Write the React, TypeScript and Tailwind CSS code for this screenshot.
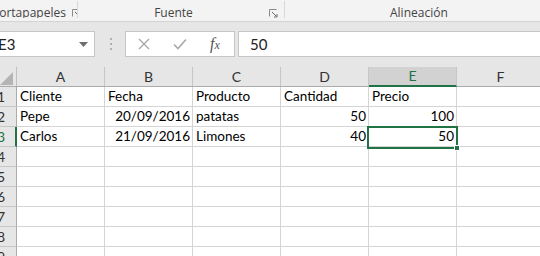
import React from "react";

const cols = ["A", "B", "C", "D", "E", "F"];

type Cell = { t: string; r?: boolean };
const data: Cell[][] = [
  [{ t: "Cliente" }, { t: "Fecha" }, { t: "Producto" }, { t: "Cantidad" }, { t: "Precio" }, { t: "" }],
  [{ t: "Pepe" }, { t: "20/09/2016", r: true }, { t: "patatas" }, { t: "50", r: true }, { t: "100", r: true }, { t: "" }],
  [{ t: "Carlos" }, { t: "21/09/2016", r: true }, { t: "Limones" }, { t: "40", r: true }, { t: "50", r: true }, { t: "" }],
];

const Launcher = () => (
  <svg width="9" height="9" viewBox="0 0 9 9" className="shrink-0">
    <path d="M0.5 0.5h7M0.5 0.5v7" stroke="#8a8a8a" strokeWidth="1" fill="none" />
    <path d="M3 3l4 4M5 8h3V5" stroke="#6a6a6a" strokeWidth="1" fill="none" />
  </svg>
);

export default function App() {
  const rows = Array.from({ length: 9 }, (_, i) => i + 1);
  return (
    <div className="w-[540px] h-[256px] overflow-hidden bg-[#e6e6e6] relative" style={{ fontFamily: "Lato, 'Liberation Sans', sans-serif" }}>
      {/* Ribbon group labels */}
      <div className="h-[22px] bg-[#f3f3f3] border-b border-[#d4d4d4] flex text-[12px] text-[#444]" style={{ fontFamily: "'Open Sans', 'Noto Sans', sans-serif" }}>
        <div className="w-[78px] flex items-center border-r border-[#d8d8d8] h-[17px] mt-[1px] overflow-hidden shrink-0">
          <span className="ml-[-8px] whitespace-nowrap leading-none pt-[7px]">Portapapeles</span>
          <span className="ml-[6px] pt-[8px]"><Launcher /></span>
        </div>
        <div className="w-[207px] flex items-center border-r border-[#d8d8d8] h-[17px] mt-[1px] shrink-0 relative">
          <span className="flex-1 text-center leading-none pt-[7px]">Fuente</span>
          <span className="mr-[6px] pt-[8px]"><Launcher /></span>
        </div>
        <div className="flex-1 flex items-center h-[17px] mt-[1px]">
          <span className="ml-[105px] leading-none pt-[7px]">Alineación</span>
        </div>
      </div>

      {/* Formula bar */}
      <div className="mt-[9px] h-[26px] flex items-stretch">
        <div className="w-[95px] bg-white border border-[#c6c6c6] border-l-0 flex items-center justify-between shrink-0">
          <span className="text-[15px] text-[#222] ml-[-2px] leading-none">E3</span>
          <svg width="9" height="5" viewBox="0 0 9 5" className="mr-[6px]">
            <path d="M0 0h9L4.5 5z" fill="#6d6d6d" />
          </svg>
        </div>
        <div className="w-[30px] flex items-center justify-center shrink-0">
          <div className="flex flex-col gap-[3px] ml-[1px]">
            <div className="w-[2px] h-[2px] bg-[#b0b0b0]" />
            <div className="w-[2px] h-[2px] bg-[#b0b0b0]" />
            <div className="w-[2px] h-[2px] bg-[#b0b0b0]" />
          </div>
        </div>
        <div className="w-[110px] bg-white border border-[#c6c6c6] flex items-center shrink-0">
          <svg width="12" height="12" viewBox="0 0 12 12" className="ml-[12px]">
            <path d="M1 1l10 10M11 1L1 11" stroke="#a9a9a9" strokeWidth="1.4" fill="none" />
          </svg>
          <svg width="14" height="12" viewBox="0 0 14 12" className="ml-[23px]">
            <path d="M1 6.5l4 4L13 1.5" stroke="#a9a9a9" strokeWidth="1.6" fill="none" />
          </svg>
          <span className="ml-[23px] text-[16px] italic text-[#555] leading-none" style={{ fontFamily: "'Liberation Serif', serif" }}>
            f<span className="text-[12px]">x</span>
          </span>
        </div>
        <div className="flex-1 ml-[3px] bg-white border border-[#c6c6c6] border-r-0 flex items-center">
          <span className="ml-[11px] text-[15px] text-[#222] leading-none">50</span>
        </div>
      </div>

      {/* Grid */}
      <div className="mt-[10px] relative bg-white">
        {/* header row */}
        <div className="flex h-[20px] bg-[#e6e6e6] border-b border-[#ababab]">
          <div className="w-[17px] shrink-0 border-r border-[#c0c0c0] relative overflow-hidden">
            <svg width="13" height="13" viewBox="0 0 13 13" className="absolute left-0 bottom-[1px]">
              <path d="M13 0V13H0z" fill="#b4b4b4" />
            </svg>
          </div>
          {cols.map((c) => (
            <div
              key={c}
              className={`w-[88px] shrink-0 flex items-center justify-center text-[14px] border-r border-[#c6c6c6] ${c === "E" ? "bg-[#d2d2d2] text-[#217346] border-b-2 border-b-[#217346] mb-[-1px]" : "text-[#333]"}`}
            >
              <span className="leading-none">{c}</span>
            </div>
          ))}
        </div>
        {rows.map((r) => (
          <div key={r} className="flex h-[20px]">
            <div
              className={`w-[17px] shrink-0 bg-[#e6e6e6] border-b border-[#c6c6c6] flex items-center overflow-hidden ${r === 3 ? "border-r-2 border-r-[#217346] text-[#217346] bg-[#dcdcdc]" : "border-r border-r-[#ababab] text-[#333]"}`}
            >
              <span className="text-[14px] leading-none ml-[-3px]">{r}</span>
            </div>
            {cols.map((c, ci) => {
              const cell = data[r - 1]?.[ci];
              return (
                <div
                  key={c}
                  className={`w-[88px] shrink-0 border-r border-b border-[#d4d4d4] flex items-center text-[13.5px] text-black whitespace-nowrap ${cell?.r ? "justify-end pr-[2px]" : "pl-[3px]"}`}
                >
                  <span className="leading-none pt-[1px]">{cell?.t}</span>
                </div>
              );
            })}
          </div>
        ))}
        {/* selection overlay */}
        <div className="absolute left-[367px] top-[59px] w-[91px] h-[23px] border-2 border-[#217346] pointer-events-none">
          <div className="absolute right-[-4px] bottom-[-4px] w-[6px] h-[6px] bg-[#217346] border border-white" />
        </div>
      </div>
    </div>
  );
}
